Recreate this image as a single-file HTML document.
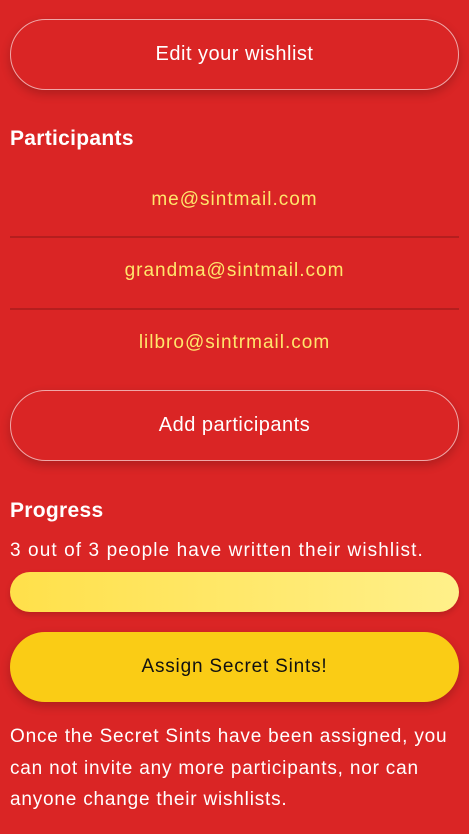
<!DOCTYPE html>
<html><head><style>
body{margin:0;width:469px;height:834px;background:#da2525;font-family:"Liberation Sans",sans-serif;color:#fff;position:relative;overflow:hidden}
.a{position:absolute}
.btn{left:10px;width:447px;border:1px solid rgba(255,255,255,.6);border-radius:36px;box-shadow:0 4px 10px rgba(0,0,0,.2);text-align:center;font-size:20px;color:#fff;letter-spacing:0.5px}
.em{left:0;width:469px;text-align:center;color:#ffe66b;font-size:19px;letter-spacing:1px}
.sep{left:10px;width:449px;height:2px;background:#b51e1e}
h2{margin:0;font-size:21px;font-weight:bold;letter-spacing:0.3px}
</style></head><body>
<div class="a btn" style="top:19px;height:69px;line-height:69px">Edit your wishlist</div>
<h2 class="a" style="left:10px;top:127px">Participants</h2>
<div class="a em" style="top:189px">me@sintmail.com</div>
<div class="a sep" style="top:236px"></div>
<div class="a em" style="top:260px">grandma@sintmail.com</div>
<div class="a sep" style="top:308px"></div>
<div class="a em" style="top:332px">lilbro@sintrmail.com</div>
<div class="a btn" style="top:390px;height:69px;line-height:69px">Add participants</div>
<h2 class="a" style="left:10px;top:499px">Progress</h2>
<div class="a" style="left:10px;top:540px;font-size:19px;letter-spacing:1.1px">3 out of 3 people have written their wishlist.</div>
<div class="a" style="left:10px;top:572px;width:449px;height:40px;border-radius:20px;background:linear-gradient(90deg,#ffe04a,#fff08a);box-shadow:0 3px 6px rgba(0,0,0,.15)"></div>
<div class="a" style="left:10px;top:632px;width:449px;height:70px;line-height:70px;border-radius:35px;background:#facc15;color:#111;text-align:center;font-size:19px;letter-spacing:0.8px;box-shadow:0 4px 10px rgba(0,0,0,.2)">Assign Secret Sints!</div>
<div class="a" style="left:10px;top:721px;width:449px;font-size:19px;line-height:31.5px;letter-spacing:0.8px">Once the Secret Sints have been assigned, you can not invite any more participants, nor can anyone change their wishlists.</div>
</body></html>
